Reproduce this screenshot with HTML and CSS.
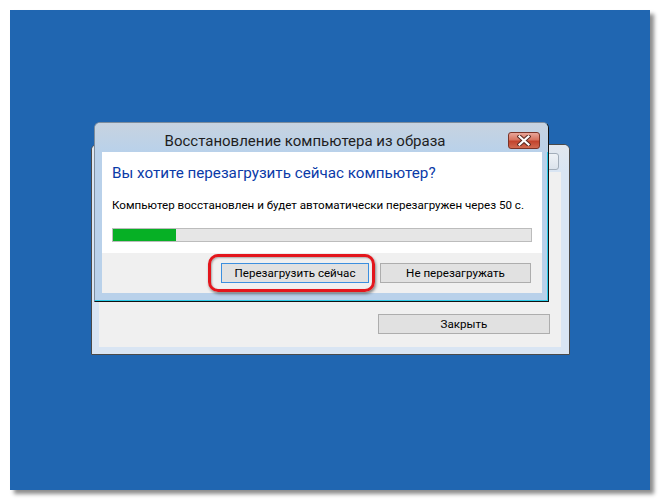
FILE: index.html
```html
<!DOCTYPE html>
<html lang="ru">
<head>
    <meta charset="UTF-8">
    <title>Восстановление компьютера из образа</title>
    <link rel="stylesheet" href="styles.css">
</head>
<body>
    <div class="screen">
        <div class="window back">
            <div class="titlebar">
                <span class="close-btn inactive"></span>
            </div>
            <div class="client">
                <div class="actions">
                    <button class="btn wide">Закрыть</button>
                </div>
            </div>
        </div>

        <div class="window front">
            <div class="titlebar">
                <span class="title">Восстановление компьютера из образа</span>
                <span class="close-btn">
                    <svg width="14" height="11" viewBox="0 0 14 11">
                        <path d="M2.5 1.5 L11.5 9.5 M11.5 1.5 L2.5 9.5" stroke="#5a2a22" stroke-width="4.2" stroke-linecap="square" fill="none"/>
                        <path d="M2.5 1.5 L11.5 9.5 M11.5 1.5 L2.5 9.5" stroke="#ffffff" stroke-width="2.2" stroke-linecap="square" fill="none"/>
                    </svg>
                </span>
            </div>
            <div class="client">
                <div class="content">
                    <h1 class="instruction">Вы хотите перезагрузить сейчас компьютер?</h1>
                    <p class="message">Компьютер восстановлен и будет автоматически перезагружен через 50 с.</p>
                    <div class="progress">
                        <div class="progress-fill" style="width: 15%;"></div>
                    </div>
                </div>
                <div class="footer">
                    <button class="btn default">Перезагрузить сейчас</button>
                    <button class="btn">Не перезагружать</button>
                </div>
            </div>
        </div>

        <!-- red annotation around the restart button -->
        <div class="highlight"></div>
    </div>
</body>
</html>
```

FILE: styles.css
```css
body {
    margin: 0;
    background: #ffffff;
    font-family: Roboto, "Noto Sans", sans-serif;
}

.screen {
    position: relative;
    margin: 10px;
    width: 640px;
    height: 480px;
    background-color: #2066b1;
    box-shadow: 4px 4px 4px rgba(0, 0, 0, 0.45);
}

.window {
    position: absolute;
    box-sizing: border-box;
    display: flex;
    flex-direction: column;
    border-radius: 6px 6px 0 0;
}

.window .titlebar {
    position: relative;
    flex: none;
}

.window .client {
    flex: 1;
    display: flex;
    flex-direction: column;
}

/* inactive window behind */
.window.back {
    left: 81px;
    top: 134px;
    width: 479px;
    height: 211px;
    border: 1px solid #4a4a4a;
    background: #d9e5f3;
    padding: 0 8px 7px 7px;
}

.window.back .titlebar {
    height: 27px;
    margin: 0 -8px 0 -7px;
    border-radius: 5px 5px 0 0;
    background: linear-gradient(#e2e7ed, #d9e5f3);
}

.window.back .client {
    background: #f0f0f0;
    justify-content: flex-end;
}

.actions {
    display: flex;
    justify-content: flex-end;
    padding: 0 11px 13px 0;
}

/* active dialog */
.window.front {
    left: 84px;
    top: 112px;
    width: 455px;
    height: 180px;
    border: 1px solid;
    border-color: #7d8c9c #111111 #111111 #7d8c9c;
    background: #b9d1ea;
    box-shadow: inset -1px -1px 0 #2ccbe8;
    padding: 0 6px 8px 7px;
}

.window.front .titlebar {
    height: 29px;
    margin: 0 -6px 0 -7px;
    padding-right: 33px;
    border-radius: 5px 5px 0 0;
    background: linear-gradient(#c7d3e0, #b9d1ea);
    display: flex;
    align-items: center;
    justify-content: center;
}

.title {
    font-size: 15px;
    color: #1e1e1e;
    padding-top: 6px;
}

.close-btn {
    position: absolute;
    top: 9px;
    right: 8px;
    width: 32px;
    height: 17px;
    box-sizing: border-box;
    border: 1px solid #7b3327;
    border-radius: 3px;
    background: linear-gradient(#e8a699 0%, #d7735f 45%, #c2432c 55%, #d06a51 100%);
    display: flex;
    align-items: center;
    justify-content: center;
}

.close-btn.inactive {
    top: 8px;
    right: 10px;
    height: 17px;
    border-color: #a2adb9;
    background: linear-gradient(#eef2f6, #dbe3ec);
}

.window.front .client {
    background: #f0f0f0;
}

.content {
    height: 101px;
    box-sizing: border-box;
    padding: 10px 10px 0 10px;
    background: #ffffff;
}

.instruction {
    margin: 0;
    font-size: 15.2px;
    line-height: 22px;
    font-weight: normal;
    color: #0a3aa8;
}

.message {
    margin: 13px 0 0;
    font-size: 11.6px;
    line-height: 16px;
    white-space: nowrap;
    color: #000000;
}

.progress {
    margin-top: 15px;
    height: 14px;
    box-sizing: border-box;
    border: 1px solid #bcbcbc;
    background: #e6e6e6;
}

.progress-fill {
    height: 100%;
    background: #06b025;
}

.footer {
    display: flex;
    justify-content: flex-end;
    gap: 11px;
    padding: 10px 11px 0 0;
}

.btn {
    height: 20px;
    box-sizing: border-box;
    padding: 0;
    border: 1px solid #adadad;
    background: #e1e1e1;
    font-family: inherit;
    font-size: 11.6px;
    color: #000000;
    width: 151px;
}

.btn.default {
    width: 148px;
    border-color: #3c8fdf;
}

.btn.wide {
    width: 172px;
}

.highlight {
    position: absolute;
    left: 198px;
    top: 244px;
    width: 167px;
    height: 38px;
    box-sizing: border-box;
    border: 3px solid #e3161c;
    border-radius: 10px;
    box-shadow: 1px 2px 3px rgba(0, 0, 0, 0.45), inset 1px 1px 2px rgba(0, 0, 0, 0.3);
}
```
